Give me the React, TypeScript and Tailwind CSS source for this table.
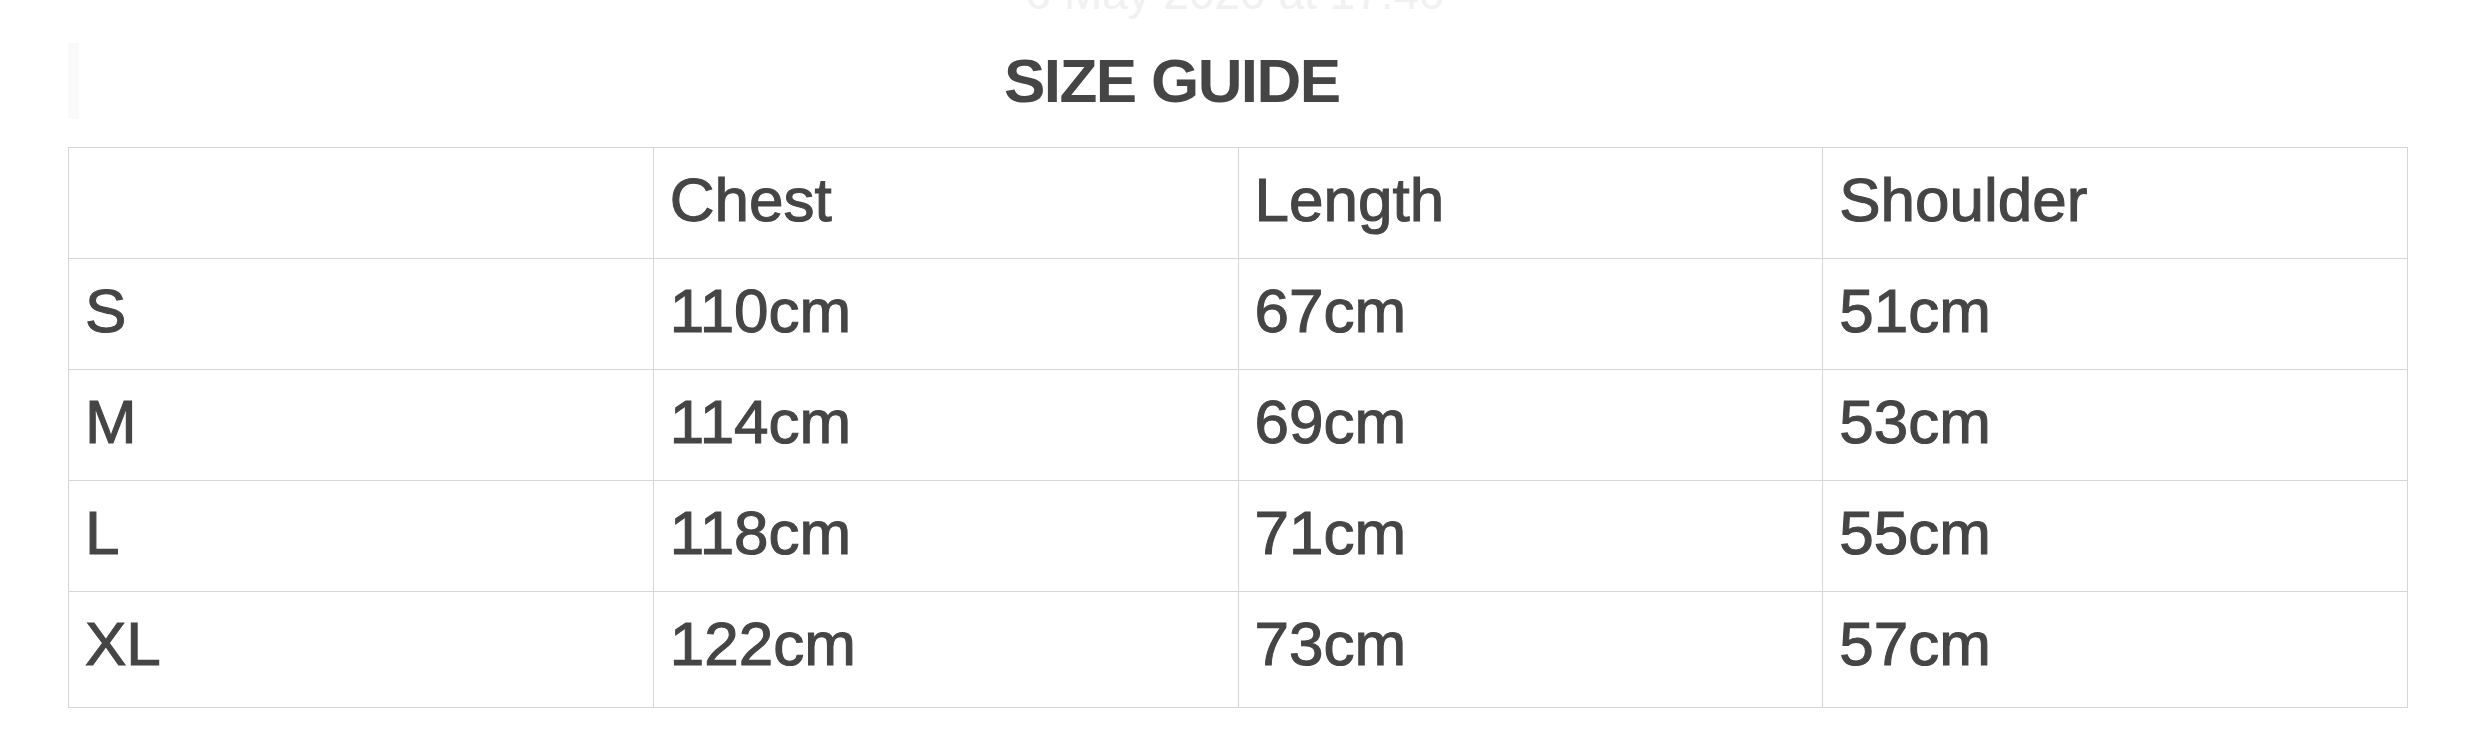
import React from 'react';

interface SizeRow {
  size: string;
  chest: string;
  length: string;
  shoulder: string;
}

const rows: SizeRow[] = [
  { size: 'S', chest: '110cm', length: '67cm', shoulder: '51cm' },
  { size: 'M', chest: '114cm', length: '69cm', shoulder: '53cm' },
  { size: 'L', chest: '118cm', length: '71cm', shoulder: '55cm' },
  { size: 'XL', chest: '122cm', length: '73cm', shoulder: '57cm' },
];

const cell = 'border border-[#d6d6d6] pl-[16px] pt-[21px] align-top text-left font-normal';

const App: React.FC = () => {
  return (
    <div
      className="min-h-screen bg-white text-[#454545] overflow-hidden"
      style={{ fontFamily: '"Liberation Sans", Arial, sans-serif' }}
    >
      {/* timestamp, mostly scrolled off the top */}
      <div className="mt-[-30px] text-center text-[46px] leading-[46px] text-[#f1f1f1]">
        6 May 2020 at 17:40
      </div>

      {/* Title */}
      <div className="mt-[27px] ml-[68px] w-[2340px] flex">
        <div className="w-[11px] bg-[#fafafa]" />
        <h1 className="pl-[925px] pt-[7px] pb-[7px] text-[62px] leading-[62px] font-bold tracking-[-1.6px]">
          SIZE GUIDE
        </h1>
      </div>

      {/* Size table */}
      <table className="mt-[28px] ml-[68px] w-[2340px] table-fixed border-collapse text-[62px] leading-[62px] [-webkit-text-stroke:1.1px_#454545]">
        <thead>
          <tr className="h-[111px]">
            <th className={cell}></th>
            <th className={cell}>Chest</th>
            <th className={cell}>Length</th>
            <th className={cell}>Shoulder</th>
          </tr>
        </thead>
        <tbody>
          {rows.map((r, i) => (
            <tr key={r.size} className={i === rows.length - 1 ? 'h-[116px]' : 'h-[111px]'}>
              <td className={cell}>{r.size}</td>
              <td className={cell}>{r.chest}</td>
              <td className={cell}>{r.length}</td>
              <td className={cell}>{r.shoulder}</td>
            </tr>
          ))}
        </tbody>
      </table>
    </div>
  );
};

export default App;
